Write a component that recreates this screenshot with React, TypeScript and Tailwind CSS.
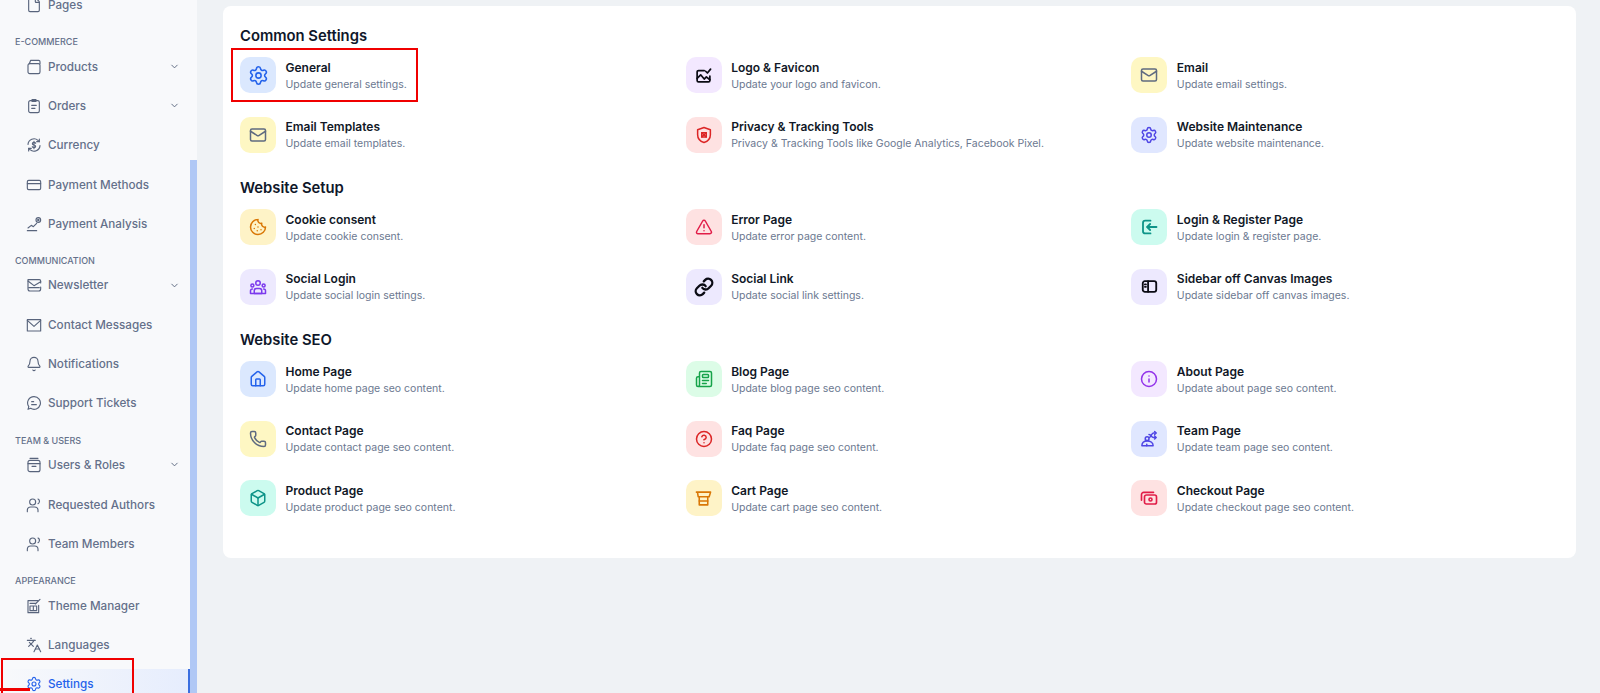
import React from "react";
import { Settings, Mail, Cookie, TriangleAlert, Link as LinkIcon, House, Newspaper, Info, Phone, CircleHelp, Box, File, Bell, CreditCard, Languages, ChevronDown } from "lucide-react";

type P = { className?: string; strokeWidth?: number };
const S = ({ className, children, w = 2 }: P & { children: React.ReactNode; w?: number }) => (
  <svg viewBox="0 0 24 24" fill="none" stroke="currentColor" strokeWidth={w} strokeLinecap="round" strokeLinejoin="round" className={className}>{children}</svg>
);

const LogoIcon = ({ className }: P) => (
  <S className={className} w={2.4}><path d="M13 5H5a2 2 0 0 0-2 2v12a2 2 0 0 0 2 2h14a2 2 0 0 0 2-2v-6" /><path d="m3 16 5-5 5 6 3-3 5 4" /><path d="m15 6 2.500 2.500L22 3" /></S>
);
const PrivacyIcon = ({ className }: P) => (
  <S className={className}><path d="M12 2 20.500 5v6.500c0 5-3.600 8.800-8.500 10.500-4.900-1.700-8.500-5.500-8.500-10.500V5z" /><path d="M9 9h6v5.500H9z" /><path d="m9 9 6 5.500M15 9l-6 5.500" /></S>
);
const LoginIcon = ({ className }: P) => (
  <S className={className} w={2.4}><path d="M14 3.500H7a3 3 0 0 0-3 3v11a3 3 0 0 0 3 3h7" /><path d="M22 12H10" /><path d="m13.500 8-4 4 4 4" /></S>
);
const SocialIcon = ({ className }: P) => (
  <S className={className}><circle cx="12" cy="6.500" r="3" /><circle cx="4.500" cy="10" r="2" /><circle cx="19.500" cy="10" r="2" /><path d="M7 20.500V17a3 3 0 0 1 3-3h4a3 3 0 0 1 3 3v3.500z" /><path d="M2 20.500V17a2.500 2.500 0 0 1 2.500-2.500M22 20.500V17a2.500 2.500 0 0 0-2.500-2.500M2 20.500h20" /></S>
);
const SidebarIcon = ({ className }: P) => (
  <S className={className} w={2.6}><rect x="2.500" y="4.500" width="19" height="15" rx="3" /><path d="M10 4.500v15" /><path d="M5.500 9H7M5.500 12.500H7" /></S>
);
const TeamIcon = ({ className }: P) => (
  <S className={className}><circle cx="9.500" cy="11.500" r="2.500" /><path d="M2.500 21c0-4.500 3-6.500 7-6.500s8 2 8 6.500z" /><path d="M9 21v-2M12 6c3 0 3 4 6 4h3M12 10c3 0 3-6 6-6h3" /><path d="m19.500 2 2 2-2 2M19.500 8l2 2-2 2" /></S>
);
const CartIcon = ({ className }: P) => (
  <S className={className} w={2.2}><path d="M2 3h20l-2 6.500H4.500L3.500 3" /><path d="M6 9.500V21h12V9.500" /><path d="M6 15.500h12" /></S>
);
const CheckoutIcon = ({ className }: P) => (
  <S className={className} w={2.2}><rect x="6" y="8" width="16" height="12" rx="2.500" /><path d="M18 4.500H5a3 3 0 0 0-3 3V15" /><circle cx="14" cy="14" r="2" /></S>
);

const Thin = ({ className, children }: P & { children: React.ReactNode }) => <S className={className} w={1.7}>{children}</S>;
const ProductsI = ({ className }: P) => <Thin className={className}><rect x="3" y="7" width="18" height="15" rx="2.500" /><path d="M5 7l2-5h12a2 2 0 0 1 2 2v3" /></Thin>;
const OrdersI = ({ className }: P) => <Thin className={className}><rect x="4" y="4" width="16" height="18" rx="2.500" /><path d="M9 2.500h6V5H9zM8.500 11h7M8.500 15.500h5" /></Thin>;
const CurrencyI = ({ className }: P) => (
  <Thin className={className}><path d="M3 11a9 9 0 0 1 15-6l2 2M21 13a9 9 0 0 1-15 6l-2-2" /><path d="M20 3v4h-4M4 21v-4h4" /><path d="M14.500 9.500c-.5-1-1.500-1.500-2.500-1.500-1.500 0-2.500.8-2.500 2s1 1.700 2.500 2 2.500.8 2.500 2-1 2-2.500 2c-1 0-2-.5-2.500-1.500M12 6.500v11" /></Thin>
);
const AnalysisI = ({ className }: P) => <Thin className={className}><path d="M2 22h14M3 18l5-4 3 2 5-5" /><circle cx="18.500" cy="6" r="3.500" /><circle cx="18.500" cy="6" r="1" /></Thin>;
const NewsI = ({ className }: P) => <Thin className={className}><path d="M22 9V6a2 2 0 0 0-2-2H3v14a3 3 0 0 0 3 3h13a3 3 0 0 0 3-3v-3" /><path d="m3 6 9 7 10-6M4 16h16" /></Thin>;
const ContactI = ({ className }: P) => <Thin className={className}><path d="M2 4h20v17H2z" /><path d="m2 5 10 9 10-9" /></Thin>;
const TicketI = ({ className }: P) => <Thin className={className}><path d="M12 2.500a9.500 9.500 0 1 1-5 17.500l-4 1.500 1.200-4A9.500 9.500 0 0 1 12 2.500z" /><path d="M8.500 10h3M8.500 14.500h7" /></Thin>;
const RolesI = ({ className }: P) => <Thin className={className}><rect x="3" y="5" width="18" height="17" rx="3" /><path d="M3 10h18M6 2h12M9 14h6" /></Thin>;
const PeopleI = ({ className }: P) => <Thin className={className}><circle cx="10" cy="7.500" r="4.500" /><path d="M2 22v-2a5 5 0 0 1 5-5h6a5 5 0 0 1 5 5v2M18 3c1.800.8 2.500 2.500 2 4.500-.2 1-1 2-2 2.500" /></Thin>;
const ThemeI = ({ className }: P) => <Thin className={className}><path d="M18 4H3v18h16V11" /><path d="M6 8h8M6 12h10v7H6zM11 12v7M14 9l7-7" /></Thin>;

const Item = ({ icon: I, label, chevron, active }: { icon: React.ComponentType<P>; label: string; chevron?: boolean; active?: boolean }) => (
  <div className={`flex shrink-0 items-center pl-[26px] pr-[10px] ${chevron ? "pb-[1px]" : ""} ${active ? "mt-[4.600px] h-[34.600px] border-r-2 border-[#3b6fe0] bg-gradient-to-r from-[#f8f9fb] to-[#e6edfd] pb-[4px] text-[#2563eb]" : "h-[39.200px] text-[#64708a]"}`}>
    <I className={`h-4 w-4 shrink-0 ${active ? "text-[#2563eb]" : "text-[#58647c]"}`} strokeWidth={1.7} />
    <span className="ml-[6px] flex-1 text-[11.700px] font-medium leading-4">{label}</span>
    {chevron && <ChevronDown className="h-[11px] w-[11px] text-[#58647c]" strokeWidth={2} />}
  </div>
);
const Label = ({ children }: { children: string }) => (
  <div className="flex h-[22.800px] shrink-0 items-end pl-[15px] text-[9px] font-medium uppercase leading-[11px] text-[#64708a]">{children}</div>
);

type Entry = { t: string; d: string; I: React.ComponentType<P>; bg: string; fg: string; size?: string; sw?: number };
const Tile = ({ t, d, I, bg, fg, size = "h-[18px] w-[18px]", sw = 2 }: Entry) => (
  <div className="flex items-center gap-[9.500px]">
    <div className={`flex h-9 w-9 shrink-0 items-center justify-center rounded-[10px] ${bg}`}>
      <I className={`${size} ${fg}`} strokeWidth={sw} />
    </div>
    <div className="min-w-0 pt-[1px]">
      <div className="text-[12px] font-semibold leading-[18px] text-[#111827]">{t}</div>
      <div className="text-[10.500px] leading-4 text-[#6b7890]">{d}</div>
    </div>
  </div>
);

const Section = ({ title, items, top }: { title: string; items: Entry[]; top: string }) => (
  <section className={top}>
    <h2 className="mb-[9.500px] text-[14.800px] font-semibold leading-6 text-[#0f172a]">{title}</h2>
    <div className="grid grid-cols-3 gap-x-4 gap-y-[23.600px]">{items.map((e) => <Tile key={e.t} {...e} />)}</div>
  </section>
);

const blue = "bg-[#dbe8fe]", yellow = "bg-[#fef7c3]", purple = "bg-[#f3e8ff]", red = "bg-[#fee2e2]", indigo = "bg-[#e0e7ff]", amber = "bg-[#fef3c7]", teal = "bg-[#ccfbef]", violet = "bg-[#ede9fe]", green = "bg-[#dcfce7]";

const common: Entry[] = [
  { t: "General", d: "Update general settings.", I: Settings, bg: blue, fg: "text-[#2563eb]", size: "h-[21px] w-[21px]", sw: 1.8 },
  { t: "Logo & Favicon", d: "Update your logo and favicon.", I: LogoIcon, bg: purple, fg: "text-[#0b0b14]", size: "h-[17px] w-[17px]" },
  { t: "Email", d: "Update email settings.", I: Mail, bg: yellow, fg: "text-[#5f6b80]" },
  { t: "Email Templates", d: "Update email templates.", I: Mail, bg: yellow, fg: "text-[#5f6b80]" },
  { t: "Privacy & Tracking Tools", d: "Privacy & Tracking Tools like Google Analytics, Facebook Pixel.", I: PrivacyIcon, bg: red, fg: "text-[#dc2626]" },
  { t: "Website Maintenance", d: "Update website maintenance.", I: Settings, bg: indigo, fg: "text-[#4f46e5]" },
];
const setup: Entry[] = [
  { t: "Cookie consent", d: "Update cookie consent.", I: Cookie, bg: amber, fg: "text-[#d97706]" },
  { t: "Error Page", d: "Update error page content.", I: TriangleAlert, bg: red, fg: "text-[#e11d48]" },
  { t: "Login & Register Page", d: "Update login & register page.", I: LoginIcon, bg: teal, fg: "text-[#0d9488]" },
  { t: "Social Login", d: "Update social login settings.", I: SocialIcon, bg: violet, fg: "text-[#7c3aed]" },
  { t: "Social Link", d: "Update social link settings.", I: LinkIcon, bg: violet, fg: "text-[#0b0b14]", size: "h-5 w-5", sw: 2.8 },
  { t: "Sidebar off Canvas Images", d: "Update sidebar off canvas images.", I: SidebarIcon, bg: violet, fg: "text-[#0b0b14]", size: "h-[17px] w-[17px]" },
];
const seo: Entry[] = [
  { t: "Home Page", d: "Update home page seo content.", I: House, bg: blue, fg: "text-[#2563eb]" },
  { t: "Blog Page", d: "Update blog page seo content.", I: Newspaper, bg: green, fg: "text-[#16a34a]" },
  { t: "About Page", d: "Update about page seo content.", I: Info, bg: purple, fg: "text-[#9333ea]" },
  { t: "Contact Page", d: "Update contact page seo content.", I: Phone, bg: yellow, fg: "text-[#5f6b80]" },
  { t: "Faq Page", d: "Update faq page seo content.", I: CircleHelp, bg: red, fg: "text-[#dc2626]" },
  { t: "Team Page", d: "Update team page seo content.", I: TeamIcon, bg: indigo, fg: "text-[#4f46e5]" },
  { t: "Product Page", d: "Update product page seo content.", I: Box, bg: teal, fg: "text-[#0d9488]" },
  { t: "Cart Page", d: "Update cart page seo content.", I: CartIcon, bg: amber, fg: "text-[#d97706]", size: "h-[17px] w-[17px]" },
  { t: "Checkout Page", d: "Update checkout page seo content.", I: CheckoutIcon, bg: red, fg: "text-[#e11d48]" },
];

export default function App() {
  return (
    <div className="relative flex h-[693px] w-[1600px] overflow-hidden bg-[#eff2f5] font-['Inter',sans-serif]">
      <aside className="flex h-full w-[197px] shrink-0 bg-[#f8f9fb]">
        <nav className="-mt-[14.500px] flex w-[190px] shrink-0 flex-col">
          <Item icon={File} label="Pages" />
          <Label>E-commerce</Label>
          <Item icon={ProductsI} label="Products" chevron />
          <Item icon={OrdersI} label="Orders" chevron />
          <Item icon={CurrencyI} label="Currency" />
          <Item icon={CreditCard} label="Payment Methods" />
          <Item icon={AnalysisI} label="Payment Analysis" />
          <Label>Communication</Label>
          <Item icon={NewsI} label="Newsletter" chevron />
          <Item icon={ContactI} label="Contact Messages" />
          <Item icon={Bell} label="Notifications" />
          <Item icon={TicketI} label="Support Tickets" />
          <Label>Team & Users</Label>
          <Item icon={RolesI} label="Users & Roles" chevron />
          <Item icon={PeopleI} label="Requested Authors" />
          <Item icon={PeopleI} label="Team Members" />
          <Label>Appearance</Label>
          <Item icon={ThemeI} label="Theme Manager" />
          <Item icon={Languages} label="Languages" />
          <Item icon={Settings} label="Settings" active />
        </nav>
        <div className="flex w-[7px] flex-col pt-[160px]">
          <div className="flex-1 bg-[#b0c8f5]" />
        </div>
      </aside>
      <main className="min-w-0 flex-1 pl-[26px] pr-[24px] pt-[6px]">
        <div className="rounded-lg bg-white pb-[42px] pl-[17px] pr-[15px] pt-[17.500px]">
          <Section title="Common Settings" items={common} top="" />
          <Section title="Website Setup" items={setup} top="mt-[23px]" />
          <Section title="Website SEO" items={seo} top="mt-[23px]" />
        </div>
      </main>
      <div className="absolute left-[231px] top-[48px] h-[54px] w-[187px] border-2 border-[#f00000]" />
      <div className="absolute left-[1px] top-[658px] h-[35px] w-[133px] border-x-2 border-t-2 border-[#f00000]" />
      <div className="absolute bottom-[2px] left-0 h-[3px] w-[30px] bg-[#f00000]" />
    </div>
  );
}
